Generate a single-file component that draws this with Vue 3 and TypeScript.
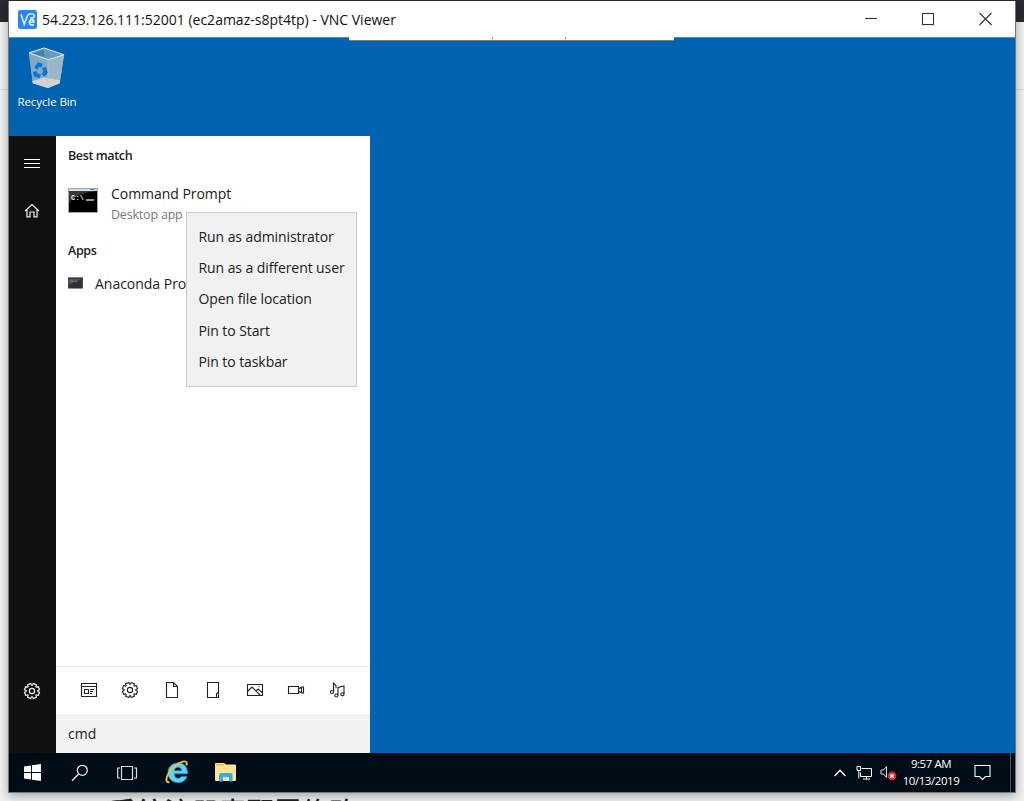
<script setup lang="ts">
const menuItems: string[] = [
  'Run as administrator',
  'Run as a different user',
  'Open file location',
  'Pin to Start',
  'Pin to taskbar',
]

// Outline of an eight-toothed gear centred on (8, 8).
function gearOutline(outer: number, inner: number): string {
  const steps: [number, number][] = [[-13, outer], [13, outer], [17, inner], [28, inner]]
  const points: string[] = []
  for (let tooth = 0; tooth < 8; tooth++) {
    for (const [offset, radius] of steps) {
      const angle = ((tooth * 45 + 22.5 + offset) * Math.PI) / 180
      points.push(`${(8 + radius * Math.cos(angle)).toFixed(2)} ${(8 + radius * Math.sin(angle)).toFixed(2)}`)
    }
  }
  return `M${points.join('L')}z`
}
const gear = gearOutline(7.7, 5.9)
</script>

<template>
  <div class="page">
    <div class="page-bar"></div>
    <div class="page-rule"></div>
    <div class="page-heading">系统注册表配置修改</div>

    <div class="window">
      <header class="titlebar">
        <svg class="logo" viewBox="0 0 20 20">
          <rect width="20" height="20" rx="2.500" fill="#2488f0" />
          <path d="M3.200 4.500l3.300 10.500L10 6.200Q10.700 4.200 12.500 4.200H15q2 0 2 2T15 8.300h-2.200" fill="none" stroke="#d5eaff" stroke-width="1.700" />
          <path d="M12.300 12.800h4.500q0-2.600-2.300-2.600-2.500 0-2.500 2.800t2.500 2.800h2.300" fill="none" stroke="#fff" stroke-width="1.500" />
        </svg>
        <span class="title">54.223.126.111:52001 (ec2amaz-s8pt4tp) - VNC Viewer</span>
        <svg class="controls" viewBox="0 0 130 20" fill="none" stroke="#333" stroke-width="1.100">
          <path d="M1 9.500H13" />
          <rect x="58.500" y="4.500" width="11" height="11" />
          <path d="M115.500 4l12 12M127.500 4l-12 12" />
        </svg>
      </header>

      <main class="desktop">
        <div class="viewer-tab"><i></i><i></i></div>
        <div class="recycle">
          <svg viewBox="0 0 40 44">
            <path d="M1.500 6L17 1l20.500 7-4.500 29-12 5-15.500-5z" fill="#8caec8" />
            <path d="M1.500 6L17 1l20.500 7L21 13z" fill="#6798bf" />
            <path d="M6 7l11-4.500V10z" fill="#477fac" />
            <path d="M1.500 6L21 13v29L5.500 37z" fill="#83a6c4" />
            <path d="M21 13l16.500-5L33 37l-12 5z" fill="#9bb5c9" />
            <path d="M4.800 35L17 31l16 3v3l-12 5-15.500-5z" fill="#d0d2d6" />
            <path d="M1.500 6L17 1l20.500 7L21 13z" fill="none" stroke="#d7e8f5" stroke-width="1" />
            <path d="M21 13v28" fill="none" stroke="#b5cbdb" stroke-width=".7" />
            <g fill="none" stroke="#0878cc" stroke-width="4">
              <path d="M8.500 22l3-4 3.500 1" /><path d="M17 21l1.500 5-2.500 3" /><path d="M13 30l-4.500-1.500-1-3.500" />
            </g>
          </svg>
          <span>Recycle Bin</span>
        </div>

        <section class="start">
          <nav class="rail">
            <svg viewBox="0 0 16 16" fill="none" stroke="#fff" stroke-width="1"><path d="M0 3.500h16M0 7.500h16M0 11.500h16" /></svg>
            <svg class="home" viewBox="0 0 16 16" fill="none" stroke="#eee" stroke-width="1.200"><path d="M1 8L8 1.500 15 8M3 6.500v7.400h3V9h4v4.900h3V6.500" /></svg>
            <svg class="rail-gear" viewBox="0 0 16 16" fill="none" stroke="#eee" stroke-width="1.200"><path :d="gear" stroke-linejoin="round" /><circle cx="8" cy="8" r="2.600" /></svg>
          </nav>
          <div class="results">
            <h2 class="best">Best match</h2>
            <div class="command">
              <svg class="terminal" viewBox="0 0 30 26">
                <rect x=".5" y=".5" width="29" height="24" fill="#000" stroke="#a4a8ad" />
                <path d="M1 1h28v2H1z" fill="#d4dbe5" /><path d="M22 1.500h5" stroke="#5384ce" />
                <path d="M1 3h28Q8 5 1 15z" fill="#383838" />
                <text x="3" y="12" class="prompt">C:\</text><path d="M18 12h8" stroke="#e8e8e8" stroke-width="1.300" />
              </svg>
              <div><p class="name">Command Prompt</p><p class="kind">Desktop app</p></div>
            </div>
            <h2 class="apps">Apps</h2>
            <div class="anaconda">
              <svg viewBox="0 0 16 13"><rect width="16" height="12.500" fill="#30343a" /><path d="M0 .5h16" stroke="#8d9298" /><path d="M1 2h14L1 8z" fill="#51555b" /><path d="M2 4.500h4M7 5h3" stroke="#999" stroke-width=".6" /></svg>
              <span>Anaconda Prompt</span>
            </div>
            <div class="filters">
              <svg viewBox="0 0 18 18"><path d="M1.500 2.500h15v13h-15zM1.500 5.500h15M4.500 8.500h4v4h-4zM10 8.500h4M10 10.500h3M10 12.500h2" /></svg>
              <svg viewBox="-1 -1 18 18"><path :d="gear" stroke-linejoin="round" /><circle cx="8" cy="8" r="2.600" /></svg>
              <svg viewBox="0 0 18 18"><path d="M3.500 1.500h7l4 4v11h-11zM10.500 1.500v4h4" /></svg>
              <svg viewBox="0 0 18 18"><path d="M12.500 16.500h-9v-15h11v10M12.500 16.500v-4l2-1v5z" /></svg>
              <svg viewBox="0 0 18 18"><path d="M1.500 3.500h15v11h-15zM1.500 10.500L6 6l8.500 8.500M10 10l2-2 4.500 4" /><path d="M12.500 5.500h1" /></svg>
              <svg viewBox="0 0 18 18"><path d="M1.500 5.500h10v7h-10zM11.500 8l3-2h2v6h-2l-3-2M14.500 6v6" /></svg>
              <svg viewBox="0 0 18 18"><path d="M4.500 11V2l2.500 2.500V7M9 14V6.500L15 5v8" /><ellipse cx="3" cy="11" rx="1.600" ry="1.500" /><ellipse cx="7.400" cy="14.500" rx="1.600" ry="1.500" /><ellipse cx="13.400" cy="13.200" rx="1.600" ry="1.500" /></svg>
            </div>
            <div class="query">cmd</div>
          </div>
          <div class="context-menu">
            <div v-for="item in menuItems" :key="item"><span>{{ item }}</span></div>
          </div>
        </section>
      </main>

      <footer class="taskbar">
        <svg class="windows" viewBox="0 0 17 17" fill="#fff"><path d="M0 2.500l7-1V8H0zM8 1.300L17 0v8H8zM0 9h7v6.500l-7-1zM8 9h9v8l-9-1.300z" /></svg>
        <svg class="search" viewBox="0 0 18 18" fill="none" stroke="#eee" stroke-width="1.250"><circle cx="11.300" cy="6.300" r="5" /><path d="M7.700 10L1 16.700" /></svg>
        <svg class="tasks" viewBox="0 0 21 16" fill="none" stroke="#ddd" stroke-width="1.200"><path d="M4.500 1.500h11v13h-11zM3 3H.7v10H3M17 3h2.500v10H17" /></svg>
        <svg class="ie" viewBox="0 0 24 24">
          <path fill-rule="evenodd" fill="#63d1fb" stroke="#1b94dc" stroke-width=".8" d="M22.500 13.800H9.300C9.500 17 11 18.300 13 18.300c1.700 0 2.700-.7 3.300-1.800h5.600C20.700 20.300 17.500 22.600 13 22.600 7 22.600 3 18.500 3 12.800S7.200 3 13 3s9.700 4 9.500 10.800zM9.400 10.700h7.300C16.500 8.400 15.200 7.200 13 7.200s-3.400 1.200-3.600 3.500z" />
          <path d="M4.500 22.300C-3.500 23 5 7 15.500 2.500c5.500-2.300 7.300-.8 5.700 3" fill="none" stroke="#f0c22c" stroke-width="1.900" />
        </svg>
        <svg class="folder" viewBox="0 0 22 19">
          <path d="M0 1q0-1 1-1h8l2 1.500h9q1 0 1 1V17q0 1-1 1H1q-1 0-1-1z" fill="#ffe394" /><path d="M1 1h8v1.700H1z" fill="#f0c04c" />
          <path d="M4 18.500V12q0-2 2-2h9.500q2 0 2 2v6.500h-3.500V14H8v4.500z" fill="#36aee5" />
        </svg>
        <div class="tray">
          <svg class="chevron" viewBox="0 0 12 8" fill="none" stroke="#fff" stroke-width="1.300"><path d="M.7 7L6 1.300 11.300 7" /></svg>
          <svg class="network" viewBox="0 0 17 14" fill="none" stroke="#fff"><path d="M5.500 2.500h10v8H4.500v-4M10.500 10.500v3M7 13h7M1 .5h3.500v4H1zM2.800 4.500v8" /></svg>
          <svg class="sound" viewBox="0 0 17 16" fill="none"><path d="M1 5h2.500l3-3.500v11l-3-3.500H1z" stroke="#ddd" /><circle cx="12" cy="11" r="4.400" fill="#dc2638" /><path d="M10.200 9.200l3.600 3.600M13.800 9.200l-3.600 3.600" stroke="#fff" stroke-width="1.300" /></svg>
          <div class="clock"><span class="time">9:57 AM</span><span class="date">10/13/2019</span></div>
          <svg class="notice" viewBox="0 0 17 17" fill="none" stroke="#fff" stroke-width="1.100"><path d="M1 1.500h15v11h-4.500L8.500 15.500 5.500 12.500H1z" /></svg>
          <i class="show-desktop"></i>
        </div>
      </footer>
    </div>
  </div>
</template>

<style>
html, body { margin: 0; overflow: hidden; }
</style>
<style scoped>
* { box-sizing: border-box; }
svg { display: block; flex: none; overflow: visible; }
p, h2 { margin: 0; }
.page { position: relative; width: 1024px; height: 801px; overflow: hidden; background: #f2f2f2; font-family: "Open Sans", "Noto Sans", sans-serif; padding: 1px 8px 0; }
.page-bar { position: absolute; left: 0; top: 0; width: 1024px; height: 22px; background: #292a2f; }
.page-rule { position: absolute; left: 0; top: 89px; width: 1024px; height: 1px; background: #dcdcdc; }
.page-heading { position: absolute; left: 109px; top: 790px; color: #222; font: 500 27.500px/40px "Noto Sans CJK SC", sans-serif; white-space: nowrap; }
.window { position: relative; display: flex; flex-direction: column; width: 1008px; height: 792px; border: 1px solid #777; border-top: 0; box-shadow: 0 3px 10px #0005; background: white; }
.titlebar { display: flex; align-items: center; height: 36px; background: #fff; padding-left: 9px; }
.logo { width: 19px; height: 19px; }
.title { margin-left: 5px; font-size: 14px; letter-spacing: 0; color: #111; white-space: nowrap; }
.controls { width: 130px; height: 20px; margin-left: auto; margin-right: 21px; }
.desktop { position: relative; height: 716px; background: #0063b1; border-top: 1px solid #4b8abd; }
.viewer-tab { position: absolute; left: 340px; top: -1px; width: 325px; height: 4px; background: #fff; border-bottom: 1px solid #7a7f83; display: flex; gap: 72px; padding-left: 143px; }
.viewer-tab i { width: 1px; height: 2px; background: #8a8a8a; }
.recycle { width: 76px; height: 98px; padding-top: 9px; display: flex; flex-direction: column; align-items: center; color: white; }
.recycle svg { width: 40px; height: 43px; }
.recycle span { font-size: 11.500px; line-height: 16px; margin-top: 4px; letter-spacing: -.08px; text-shadow: 0 1px 1px #0345; white-space: nowrap; }
.start { position: relative; display: flex; width: 361px; height: 617px; color: #202020; background: white; }
.rail { width: 47px; background: #101010; display: flex; flex-direction: column; align-items: center; padding-top: 20px; padding-bottom: 54px; }
.rail svg { width: 16px; height: 16px; margin-left: -1px; }
.rail .home { margin-top: 31px; }
.rail .rail-gear { margin-top: auto; }
.results { width: 314px; display: flex; flex-direction: column; }
h2 { font-size: 12.500px; line-height: 18px; font-weight: 600; padding-left: 12px; letter-spacing: -.38px; }
.best { margin-top: 11px; }
.command { display: flex; height: 45px; margin-top: 18px; padding-left: 12px; }
.terminal { width: 30px; height: 26px; margin: 5px 13px 0 0; }
.prompt { font: bold 7px "Liberation Mono", monospace; fill: #eee; letter-spacing: .2px; }
.name { font-size: 14px; line-height: 21px; letter-spacing: -.04px; }
.kind { font-size: 12.500px; line-height: 20px; color: #777; letter-spacing: -.2px; margin-top: 1px; }
.apps { margin-top: 14px; }
.anaconda { display: flex; align-items: center; height: 22px; margin-top: 12px; padding-left: 12px; font-size: 14px; letter-spacing: -.02px; }
.anaconda svg { width: 15px; height: 12px; margin-right: 12px; }
.filters { margin-top: auto; height: 48px; border-top: 1px solid #e5e5e5; display: flex; align-items: center; gap: 23.600px; padding: 0 0 1px 23.500px; }
.filters svg { width: 18px; height: 18px; fill: none; stroke: #222; stroke-width: 1.100; }
.query { height: 39px; background: #f2f2f2; font-size: 14px; line-height: 39px; padding-left: 12px; }
.context-menu { position: absolute; left: 177px; top: 76px; width: 171px; height: 175px; border: 1px solid #ccc; background: #f1f1f1; padding: 7.500px 11.500px; font-size: 14px; line-height: 31.400px; letter-spacing: -.08px; white-space: nowrap; }
.taskbar { display: flex; align-items: center; height: 39px; background: #000d17; color: #fff; padding-left: 15px; }
.windows { width: 17px; height: 17px; }
.search { width: 18px; height: 18px; margin-left: 30px; }
.tasks { width: 21px; height: 16px; margin-left: 28px; }
.ie { width: 24px; height: 24px; margin-left: 27px; margin-top: -2px; }
.folder { width: 22px; height: 19px; margin-left: 26px; }
.tray { margin-left: auto; height: 39px; display: flex; align-items: center; }
.chevron { width: 12px; height: 8px; margin-right: 10px; }
.network { width: 17px; height: 14px; margin-right: 7px; }
.sound { width: 17px; height: 16px; }
.clock { width: 58px; margin: -2px 14px 0 5px; text-align: center; font-size: 11.500px; line-height: 17px; letter-spacing: -.45px; white-space: nowrap; display: flex; flex-direction: column; align-items: center; }
.notice { width: 17px; height: 17px; }
.show-desktop { width: 5px; height: 39px; border-left: 1px solid #4c555c; margin-left: 19px; }
</style>
